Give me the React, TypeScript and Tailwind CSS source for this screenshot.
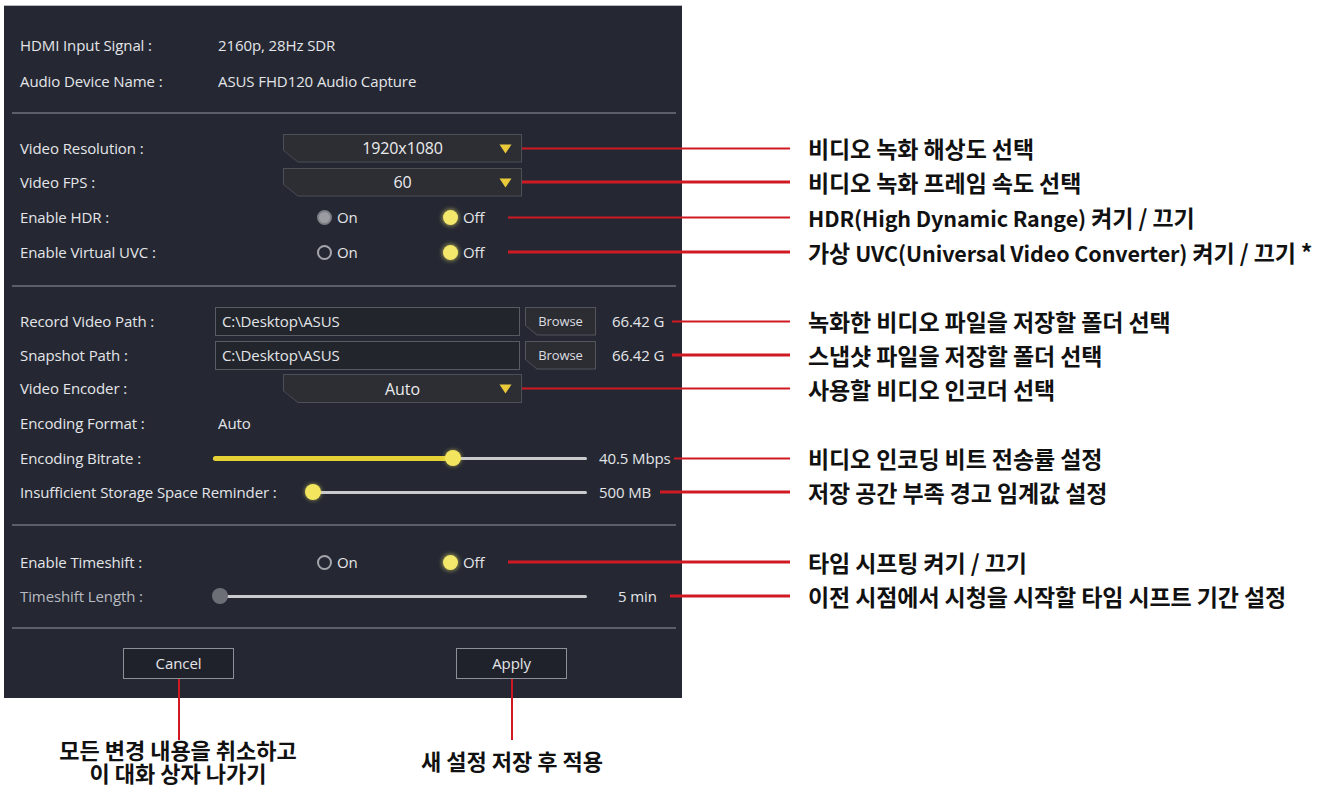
import React from 'react';

const RED = 'bg-[#cf1a24]';

type CalloutProps = { pos: string; line: string; children: React.ReactNode; thick?: string };

// red leader line + Korean note, hung off the right side of a row
const Callout = ({ pos, line, children, thick = 'h-[3px]' }: CalloutProps) => (
  <div className={`absolute top-1/2 -translate-y-1/2 flex items-center z-10 ${pos}`}>
    <div className={`${line} ${thick} ${RED}`} />
    <span className="ml-[18px] whitespace-nowrap text-[23px] font-bold leading-none text-[#111] font-['Noto_Sans_CJK_KR','Noto_Sans',sans-serif]">
      {children}
    </span>
  </div>
);

// latin runs in the notes are set a little smaller, as in the source image
const Lat = ({ children }: { children: React.ReactNode }) => <span className="text-[21.5px]">{children}</span>;

const Row = ({ h = 'h-[34px]', children }: { h?: string; children: React.ReactNode }) => (
  <div className={`relative flex items-center pl-4 ${h}`}>{children}</div>
);

const Label = ({ w = 'w-[198px]', dim = false, children }: { w?: string; dim?: boolean; children: React.ReactNode }) => (
  <div className={`${w} shrink-0 whitespace-nowrap ${dim ? 'text-[#b9bbc1]' : 'text-[#e4e5e8]'}`}>{children}</div>
);

const Separator = ({ mt }: { mt: string }) => <div className={`${mt} ml-2 mr-[6px] h-[2px] bg-[#5c5f68]`} />;

const Dropdown = ({ value }: { value: string }) => (
  <div className="ml-[65px] h-[29px] w-[239px] bg-[#4d4f57] [clip-path:polygon(0_0,100%_0,100%_100%,15px_100%,0_calc(100%-12px))]">
    <div className="relative m-px flex h-[27px] items-center justify-center bg-[#2d2e34] text-[16px] text-[#ebebec] [clip-path:polygon(0_0,100%_0,100%_100%,14px_100%,0_calc(100%-11px))]">
      {value}
      <svg className="absolute right-[9px] top-[9px]" width="13" height="10" viewBox="0 0 13 10">
        <path d="M0.5 0.5 H12.5 L6.5 9.5 Z" fill="#e9c93a" />
      </svg>
    </div>
  </div>
);

const Radio = ({ state }: { state: 'on' | 'off' | 'grey' }) => {
  if (state === 'on')
    return <span className="inline-block h-[15px] w-[15px] rounded-full bg-[#f3e86c] shadow-[0_0_4px_1px_rgba(243,232,108,0.55)]" />;
  if (state === 'grey')
    return <span className="inline-block h-[15px] w-[15px] rounded-full border-[2px] border-[#7d7f86] bg-[#9b9ca2]" />;
  return <span className="inline-block h-[15px] w-[15px] rounded-full border-[2px] border-[#a3a5ab]" />;
};

const RadioPair = ({ on }: { on: 'off' | 'grey' }) => (
  <div className="ml-[99px] flex items-center text-[#e4e5e8]">
    <div className="flex w-[126px] items-center gap-[5px]">
      <Radio state={on} />
      <span>On</span>
    </div>
    <div className="flex items-center gap-[5px]">
      <Radio state="on" />
      <span>Off</span>
    </div>
  </div>
);

const PathField = ({ value }: { value: string }) => (
  <div className="-ml-[3px] flex items-center">
    <div className="flex h-[29px] w-[305px] items-center border border-[#595b63] bg-[#23252d] pl-[6px] text-[#e4e5e8]">
      {value}
    </div>
    <div className="ml-[5px] h-[29px] w-[71px] bg-[#53555d] [clip-path:polygon(0_0,100%_0,100%_100%,12px_100%,0_calc(100%-10px))]">
      <div className="m-px flex h-[27px] items-center justify-center bg-[#2c2d33] text-[13px] text-[#dcdde0] [clip-path:polygon(0_0,100%_0,100%_100%,11px_100%,0_calc(100%-9px))]">
        Browse
      </div>
    </div>
    <span className="ml-[16px] text-[#e4e5e8]">66.42 G</span>
  </div>
);

const Button = ({ children, line }: { children: React.ReactNode; line: string }) => (
  <div className="relative">
    <div className="flex h-[31px] w-[111px] items-center justify-center border border-[#8d9099] bg-[#1f222b] text-[#e4e5e8]">
      {children}
    </div>
    <div className={`absolute left-1/2 top-full -translate-x-1/2 w-[2px] ${line} ${RED}`} />
  </div>
);

export default function App() {
  return (
    <div className="h-[793px] w-[1325px] overflow-hidden bg-white pl-1 pt-[5px]">
      <div className="relative w-[678px] border-t border-[#b8bac0] bg-[#252833] pt-[21px] pb-[19px] text-[15px] leading-tight font-['Open_Sans','Noto_Sans',sans-serif] tracking-[-0.1px]">
        <Row h="h-[36px]">
          <Label>HDMI Input Signal :</Label>
          <span className="text-[#e4e5e8]">2160p, 28Hz SDR</span>
        </Row>
        <Row h="h-[36px]">
          <Label>Audio Device Name :</Label>
          <span className="text-[#e4e5e8]">ASUS FHD120 Audio Capture</span>
        </Row>

        <Separator mt="mt-[13px]" />

        <div className="mt-[17px]">
          <Row>
            <Label>Video Resolution :</Label>
            <Dropdown value="1920x1080" />
            <Callout pos="left-[518px]" line="w-[268px]" thick="h-[2px]">비디오 녹화 해상도 선택</Callout>
          </Row>
          <Row>
            <Label>Video FPS :</Label>
            <Dropdown value="60" />
            <Callout pos="left-[518px]" line="w-[268px]">비디오 녹화 프레임 속도 선택</Callout>
          </Row>
          <Row h="h-[36px]">
            <Label>Enable HDR :</Label>
            <RadioPair on="grey" />
            <Callout pos="left-[504px]" line="w-[282px]" thick="h-[2px]">
              <Lat>HDR(High Dynamic Range)</Lat> 켜기 / 끄기
            </Callout>
          </Row>
          <Row>
            <Label>Enable Virtual UVC :</Label>
            <RadioPair on="off" />
            <Callout pos="left-[504px]" line="w-[282px]">
              가상 <Lat>UVC(Universal Video Converter)</Lat> 켜기 / 끄기 *
            </Callout>
          </Row>
        </div>

        <Separator mt="mt-[16px]" />

        <div className="mt-[17px]">
          <Row>
            <Label>Record Video Path :</Label>
            <PathField value="C:\Desktop\ASUS" />
            <Callout pos="left-[668px]" line="w-[118px]" thick="h-[2px]">녹화한 비디오 파일을 저장할 폴더 선택</Callout>
          </Row>
          <Row>
            <Label>Snapshot Path :</Label>
            <PathField value="C:\Desktop\ASUS" />
            <Callout pos="left-[668px]" line="w-[118px]">스냅샷 파일을 저장할 폴더 선택</Callout>
          </Row>
          <Row h="h-[33px]">
            <Label>Video Encoder :</Label>
            <Dropdown value="Auto" />
            <Callout pos="left-[518px]" line="w-[268px]" thick="h-[2px]">사용할 비디오 인코더 선택</Callout>
          </Row>
          <Row h="h-[36px]">
            <Label>Encoding Format :</Label>
            <span className="text-[#e4e5e8]">Auto</span>
          </Row>
          <Row>
            <Label>Encoding Bitrate :</Label>
            <div className="relative -ml-[5px] flex h-4 w-[374px] items-center">
              <div className="h-[3px] w-full rounded-full bg-[#c9cace]" />
              <div className="absolute left-0 h-[5px] w-[240px] rounded-full bg-[#e6d237]" />
              <div className="absolute left-[232px] h-4 w-4 rounded-full bg-[#f3e65e] shadow-[0_0_4px_rgba(243,230,94,0.6)]" />
            </div>
            <span className="ml-[12px] text-[#e4e5e8]">40.5 Mbps</span>
            <Callout pos="left-[670px]" line="w-[116px]" thick="h-[2px]">비디오 인코딩 비트 전송률 설정</Callout>
          </Row>
          <Row>
            <Label w="w-[285px]">Insufficient Storage Space Reminder :</Label>
            <div className="relative flex h-4 w-[282px] items-center">
              <div className="ml-2 h-[3px] w-full rounded-full bg-[#c9cace]" />
              <div className="absolute left-0 h-4 w-4 rounded-full bg-[#f3e65e] shadow-[0_0_4px_rgba(243,230,94,0.6)]" />
            </div>
            <span className="ml-[12px] text-[#e4e5e8]">500 MB</span>
            <Callout pos="left-[656px]" line="w-[130px]">저장 공간 부족 경고 임계값 설정</Callout>
          </Row>
        </div>

        <Separator mt="mt-[15px]" />

        <div className="mt-[19px]">
          <Row>
            <Label>Enable Timeshift :</Label>
            <RadioPair on="off" />
            <Callout pos="left-[504px]" line="w-[282px]">타임 시프팅 켜기 / 끄기</Callout>
          </Row>
          <Row>
            <Label dim>Timeshift Length :</Label>
            <div className="relative -ml-[6px] flex h-4 w-[375px] items-center">
              <div className="ml-3 h-[3px] w-full rounded-full bg-[#c9cace]" />
              <div className="absolute left-0 h-4 w-4 rounded-full bg-[#6d6f76]" />
            </div>
            <span className="ml-[31px] text-[#e4e5e8]">5 min</span>
            <Callout pos="left-[666px]" line="w-[120px]">이전 시점에서 시청을 시작할 타임 시프트 기간 설정</Callout>
          </Row>
        </div>

        <Separator mt="mt-[14px]" />

        <div className="mt-[19px] flex pl-[119px]">
          <Button line="h-[61px]">Cancel</Button>
          <div className="ml-[222px]">
            <Button line="h-[61px]">Apply</Button>
          </div>
        </div>
      </div>

      <div className="mt-[40px] flex text-[22px] font-bold leading-[23px] text-[#111] font-['Noto_Sans_CJK_KR','Noto_Sans',sans-serif]">
        <div className="w-[348px] text-center">
          <div>모든 변경 내용을 취소하고</div>
          <div>이 대화 상자 나가기</div>
        </div>
        <div className="w-[320px] pt-[11px] text-center">새 설정 저장 후 적용</div>
      </div>
    </div>
  );
}
